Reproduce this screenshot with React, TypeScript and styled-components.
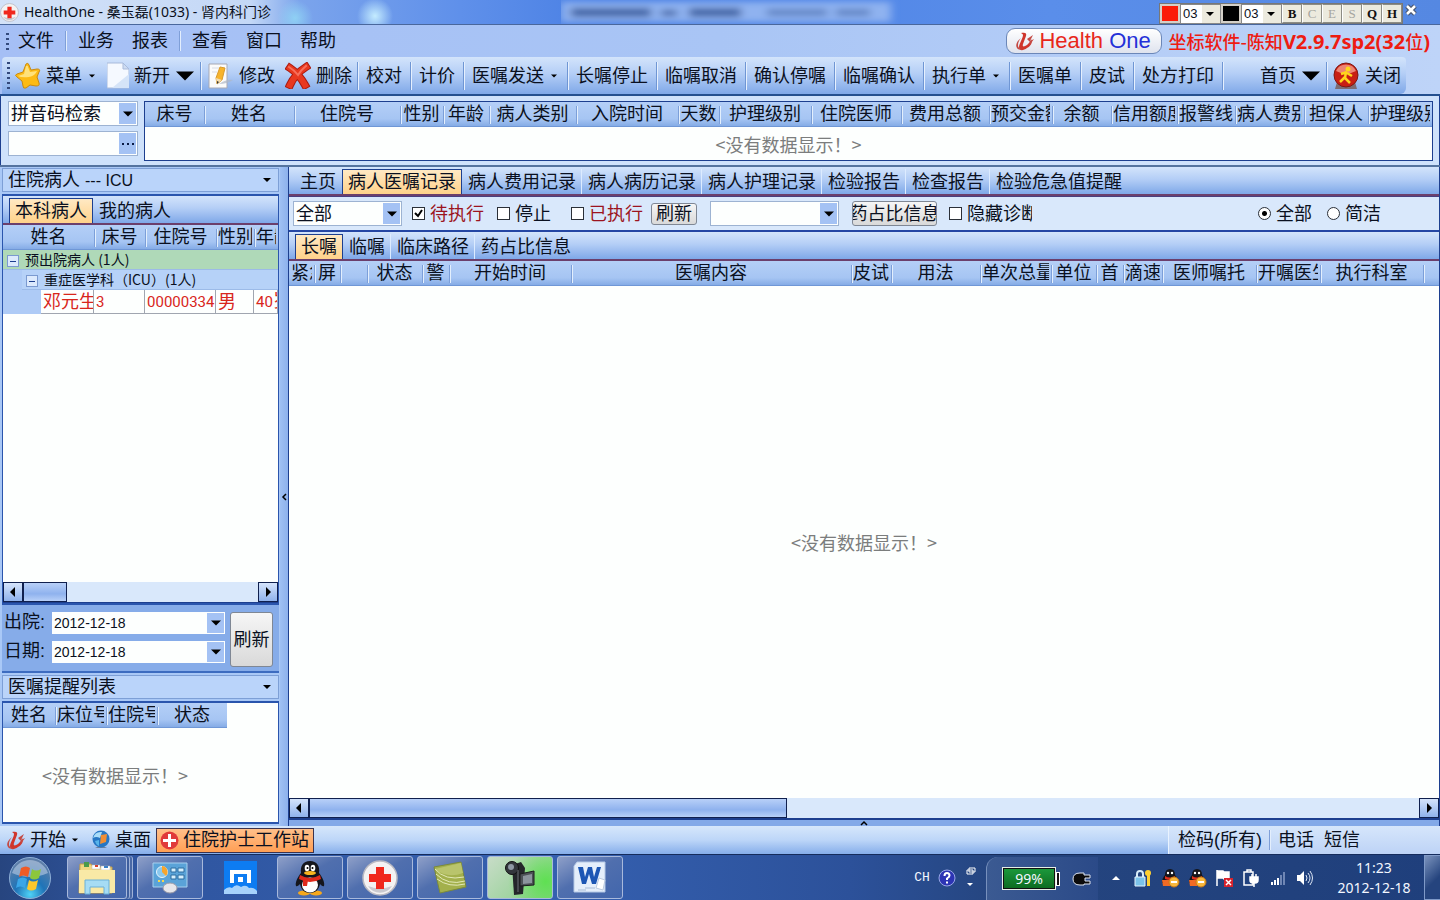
import React from "react";
import styled, { createGlobalStyle, css } from "styled-components";

const Global = createGlobalStyle`
  *, *::before, *::after { box-sizing: border-box; }
  body {
    margin: 0;
    font-family: "Liberation Sans", "Noto Sans CJK SC", sans-serif;
    font-size: 18px;
    line-height: 24px;
    color: #0a1020;
    background: #7ea6e6;
  }
  button, input, select { font: inherit; color: inherit; margin: 0; }
  button { cursor: pointer; }
`;

const navy = "#1d3f8f";
const barGradient = "linear-gradient(#d3e4fb 0%, #b4cef6 45%, #7fa8e8 100%)";
const headGradient = "linear-gradient(#b4cff7 0%, #a6c5f3 70%, #85ace6 100%)";
const orange = "linear-gradient(#ffe9c4, #ffd28a)";

const Page = styled.div`
  display: flex;
  flex-direction: column;
  min-height: 100vh;
  overflow: hidden;
`;

/* Window title */
const TitleBar = styled.header`
  display: flex;
  align-items: center;
  height: 25px;
  padding-right: 21px;
  border-bottom: 1px solid #49679c;
  background:
    radial-gradient(circle at 295px 18px, #8fd0f4 0, transparent 18px),
    radial-gradient(circle at 375px 16px, #c4ecff 0, transparent 18px),
    linear-gradient(90deg, #d3e2f8 0, #c4d8f6 250px, #7ba4ec 300px, #5f90ea 460px, #4a80e4 600px, #5a8eea 1050px, #5588e2 100%);
`;
const TitleText = styled.h1`
  margin: 0 0 0 5px;
  font: 400 14px/22px "Noto Sans", "Noto Sans CJK SC", sans-serif;
  white-space: nowrap;
`;
const Glass = styled.svg`
  flex: 1;
  height: 24px;
  margin-left: 290px;
`;
const PenBar = styled.div`
  display: flex;
  align-items: stretch;
  height: 21px;
  margin-top: 3px;
  background: #ece9d8;
  border: 1px solid #777;
`;
const Swatch = styled.button<{ $c: string }>`
  width: 20px;
  padding: 0;
  border: 2px solid #d4d0c8;
  background: ${(p) => p.$c};
`;
const PenSize = styled.select`
  appearance: none;
  width: 41px;
  padding: 0 0 0 2px;
  border: 1px solid #888;
  border-radius: 0;
  background: #fff;
  font-size: 13px;
  line-height: 18px;
`;
const PenKey = styled.button<{ $off?: boolean }>`
  width: 20px;
  padding: 0;
  border: 1px solid #8c8c84;
  border-left-color: #fff;
  background: #eceade;
  font: 700 13px/17px "Liberation Serif", serif;
  color: ${(p) => (p.$off ? "#a6a6a0" : "#111")};
  font-weight: ${(p) => (p.$off ? 400 : 700)};
`;
const TitleClose = styled.button`
  width: 16px;
  height: 18px;
  margin: 0 0 4px 0;
  padding: 0;
  border: 0;
  background: none;
  line-height: 0;
`;

/* Menu and toolbar */
const MenuBar = styled.nav`
  display: flex;
  align-items: center;
  height: 32px;
  padding: 0 10px 0 6px;
  background: linear-gradient(90deg, #a5bff5, #a9c5f5 50%, #bed4f8);
`;
const Grip = styled.span<{ $h: number }>`
  width: 3px;
  height: ${(p) => p.$h}px;
  background: repeating-linear-gradient(#33497c 0 2px, transparent 2px 5px);
`;
const MenuItem = styled.button`
  padding: 0 9px;
  border: 0;
  background: none;
  white-space: nowrap;
`;
const MenuSep = styled.span`
  width: 2px;
  height: 20px;
  margin: 0 2px;
  border-left: 1px solid #7f9fd8;
  border-right: 1px solid #e3eefd;
`;
const Brand = styled.div`
  display: flex;
  align-items: center;
  gap: 4px;
  width: 156px;
  height: 26px;
  margin-left: auto;
  padding-left: 8px;
  border: 1px solid #6b87b8;
  border-radius: 9px;
  background: linear-gradient(#fff, #dfe3ee);
  font-size: 22px;
  white-space: nowrap;
  color: #e8271a;
  b { font-weight: 400; color: #2430d8; }
`;
const Version = styled.p`
  margin: 0 0 0 6px;
  font-family: "Noto Sans CJK SC", sans-serif;
  font-weight: 500;
  white-space: nowrap;
  color: #ee1c12;
  b { font: 700 20px/24px "Noto Sans", sans-serif; }
`;
const ToolBarRow = styled.div`
  height: 39px;
  padding: 0 34px 0 2px;
  border-bottom: 2px solid #24508f;
  background: linear-gradient(90deg, #a5bff5, #a9c5f5 50%, #bed4f8);
`;
const ToolBar = styled.div`
  display: flex;
  align-items: center;
  height: 37px;
  padding-left: 5px;
  border-radius: 4px 4px 6px 0;
  background: ${barGradient};
`;
const Tool = styled.button<{ $icon?: boolean; $sep?: boolean; $end?: boolean }>`
  display: flex;
  align-items: center;
  gap: 5px;
  height: 28px;
  padding: 0 ${(p) => (p.$icon ? 5 : 8)}px;
  border: 0;
  border-right: ${(p) => (p.$sep ? "1px solid #6f96d4" : "0")};
  box-shadow: ${(p) => (p.$sep ? "1px 0 0 #e6f0fe" : "none")};
  margin-left: ${(p) => (p.$end ? "auto" : "0")};
  background: none;
  white-space: nowrap;
`;

/* Search strip */
const SearchStrip = styled.section`
  display: flex;
  gap: 6px;
  padding: 5px 6px 4px 7px;
  border-left: 1px solid ${navy};
  border-right: 1px solid ${navy};
  background: #cfe2fb;
`;
const SearchFields = styled.div`
  display: flex;
  flex-direction: column;
  gap: 5px;
  width: 130px;
`;
const ComboBox = styled.div<{ $w?: number; $h?: number; $flat?: boolean }>`
  display: grid;
  flex: none;
  width: ${(p) => (p.$w ? p.$w + "px" : "auto")};
  height: ${(p) => p.$h ?? 25}px;
  border: ${(p) => (p.$flat ? "0" : "1px solid #9db3d2")};
  background: #fdfffe;
  > * { grid-area: 1 / 1; }
`;
const comboField = css`
  appearance: none;
  width: 100%;
  min-width: 0;
  height: 100%;
  padding: 0 20px 0 2px;
  border: 0;
  border-radius: 0;
  background: none;
  outline: none;
`;
const SelectField = styled.select`
  ${comboField}
  line-height: 20px;
`;
const InputField = styled.input<{ $small?: boolean }>`
  ${comboField}
  font-size: ${(p) => (p.$small ? 14 : 18)}px;
`;
const ComboKey = styled.span`
  display: flex;
  align-items: center;
  justify-content: center;
  justify-self: end;
  align-self: stretch;
  width: 17px;
  margin: 1px;
  background: #a4c2f4;
  pointer-events: none;
`;

/* Data grids */
const GridFrame = styled.div`
  flex: 1;
  min-width: 0;
  border: 1px solid ${navy};
  background: #fdfffe;
`;
const Grid = styled.table<{ $w?: number }>`
  width: ${(p) => (p.$w ? p.$w + "px" : "100%")};
  table-layout: fixed;
  border-collapse: separate;
  border-spacing: 0;
`;
const HeadCell = styled.th`
  height: 25px;
  padding: 0 2px;
  border-bottom: 1px solid #6f97d6;
  background: ${headGradient};
  font-weight: 400;
`;
const HeadLabel = styled.div`
  height: 24px;
  overflow: hidden;
  white-space: nowrap;
`;
const HeadCells = styled.tr`
  ${HeadCell} + ${HeadCell} {
    background: linear-gradient(#7c9fd9, #7c9fd9) 0 4px / 1px 18px no-repeat,
      linear-gradient(#e3effd, #e3effd) 1px 4px / 1px 18px no-repeat, ${headGradient};
  }
`;
const EmptyRow = styled.tr`
  td { height: 33px; padding: 0; }
`;
const Empty = styled.p`
  margin: 0;
  font-family: "Noto Sans CJK SC", sans-serif;
  text-align: center;
  color: #7b7d7d;
`;
const EmptyTall = styled.div<{ $w?: number }>`
  display: flex;
  flex: 1;
  align-items: center;
  justify-content: center;
  width: ${(p) => (p.$w ? p.$w + "px" : "auto")};
`;

/* Main area */
const Main = styled.main`
  display: flex;
  flex: 1;
  border-top: 2px solid #55749f;
  background: #a9c8f6;
`;
const Side = styled.aside`
  display: flex;
  flex-direction: column;
  flex: none;
  width: 280px;
  padding: 1px 0 2px 2px;
`;
const GroupHead = styled.button`
  display: flex;
  align-items: center;
  justify-content: space-between;
  height: 24px;
  margin-right: 1px;
  padding: 0 6px 0 5px;
  border: 1px solid #7d9fd6;
  background: #bad4fa;
  text-align: left;
  small { font-size: 16px; }
`;
const SidePanel = styled.div<{ $grow?: boolean; $h?: number }>`
  display: flex;
  flex-direction: column;
  flex: ${(p) => (p.$grow ? "1" : "none")};
  height: ${(p) => (p.$h ? p.$h + "px" : "auto")};
  margin-top: 2px;
  margin-right: 1px;
  border: 2px solid #2a55ad;
  border-width: 2px 1px;
  background: #fdfffe;
`;
const Gap = styled.div`
  height: 2px;
`;
const Tabs = styled.div<{ $indent: number }>`
  display: flex;
  align-items: flex-end;
  height: 29px;
  padding-left: ${(p) => p.$indent}px;
  border-bottom: 2px solid #6b3f6c;
  background: ${barGradient};
`;
const Tab = styled.button<{ $on?: boolean; $sep?: boolean }>`
  height: 25px;
  padding: 0 5px 0 6px;
  border: 0;
  border-right: 1px solid ${(p) => (p.$sep ? "#dcebff" : "transparent")};
  background: none;
  white-space: nowrap;
  ${(p) =>
    p.$on &&
    css`
      padding: 0 5px;
      border: 1px solid ${navy};
      border-bottom: 0;
      background: ${orange};
    `}
`;
const Indent = styled.td`
  background: #aecbf6;
`;
const GroupCell = styled.td<{ $green?: boolean }>`
  height: 20px;
  padding: 0 0 0 4px;
  border-bottom: 1px solid #9cbbe8;
  background: ${(p) => (p.$green ? "#afd9b8" : "#b6d2f8")};
  font-family: "Noto Sans CJK SC", sans-serif;
  font-size: 14px;
  line-height: 19px;
  white-space: nowrap;
`;
const Fold = styled.button`
  width: 12px;
  height: 12px;
  margin-right: 6px;
  padding: 0;
  border: 1px solid #7b9ad0;
  background: linear-gradient(#1d3f8f, #1d3f8f) center / 6px 1px no-repeat, #dceafd;
  vertical-align: -1px;
`;
const RedCell = styled.td`
  height: 24px;
  padding: 0 0 0 2px;
  overflow: hidden;
  border-right: 1px solid #a0a6b0;
  border-bottom: 1px solid #a0a6b0;
  font-size: 18px;
  line-height: 22px;
  white-space: nowrap;
  color: #d8261c;
  small { font: 15px/22px Roboto, sans-serif; }
`;
const Scroll = styled.div`
  display: flex;
  height: 21px;
  margin-top: auto;
  border-bottom: 1px solid ${navy};
  background: #d9e8fb;
`;
const ScrollKey = styled.button<{ $end?: boolean }>`
  width: 20px;
  padding: 0;
  border: 1px solid #10204e;
  margin-left: ${(p) => (p.$end ? "auto" : "0")};
  background: linear-gradient(#d5e4fb, #8fb2ec);
  line-height: 0;
`;
const ScrollThumb = styled.div<{ $w: string }>`
  width: ${(p) => p.$w};
  border: 1px solid #10204e;
  background: linear-gradient(#b8d0f8, #8fb2ee 60%, #b8d0f8);
`;
const DateForm = styled.form`
  display: flex;
  gap: 5px;
  height: 68px;
  margin-right: 1px;
  padding: 7px 6px 0 2px;
  border-bottom: 2px solid #3d6cc0;
  background: #86ace9;
`;
const DateRows = styled.div`
  display: flex;
  flex-direction: column;
  gap: 7px;
`;
const DateRow = styled.div`
  display: flex;
  label { width: 48px; line-height: 20px; white-space: nowrap; }
`;
const PushButton = styled.button<{ $w: number; $h: number }>`
  display: flex;
  align-items: center;
  justify-content: center;
  width: ${(p) => p.$w}px;
  height: ${(p) => p.$h}px;
  padding: 0;
  overflow: hidden;
  border: 1px solid #7f8794;
  border-radius: 3px;
  background: linear-gradient(#f6f6f6, #d9d9d9);
  line-height: 18px;
  white-space: nowrap;
`;
const Splitter = styled.div`
  display: flex;
  align-items: center;
  flex: none;
  width: 8px;
  background: linear-gradient(90deg, #9fc0f3, #8db1ec);
`;
const Work = styled.section`
  display: flex;
  flex-direction: column;
  flex: 1;
  min-width: 0;
  border-left: 1px solid ${navy};
  border-right: 1px solid ${navy};
`;
const Filters = styled.div`
  display: flex;
  align-items: center;
  height: 36px;
  padding: 0 58px 0 4px;
  border-top: 1px solid #4a3f80;
  border-bottom: 2px solid #2446a4;
  background: #d9e8fb;
`;
const Check = styled.label<{ $gap: number; $red?: boolean; $w?: number }>`
  display: flex;
  align-items: center;
  gap: 5px;
  flex: none;
  width: ${(p) => (p.$w ? p.$w + "px" : "auto")};
  margin-left: ${(p) => p.$gap}px;
  overflow: hidden;
  white-space: nowrap;
  color: ${(p) => (p.$red ? "#9c1420" : "inherit")};
  input {
    appearance: none;
    flex: none;
    width: 13px;
    height: 13px;
    margin: 0;
    border: 1px solid #2b3038;
    background: #fff;
  }
  input[type="radio"] { border-radius: 50%; }
  input[type="radio"]:checked { background: radial-gradient(circle, #000 0 2px, #fff 3px); }
`;
const CheckMark = styled.span`
  display: grid;
  flex: none;
  > * { grid-area: 1 / 1; }
  svg { pointer-events: none; }
`;
const Spacer = styled.span<{ $w: number }>`
  flex: none;
  width: ${(p) => p.$w}px;
`;
const Right = styled.div`
  display: flex;
  margin-left: auto;
`;
const Orders = styled.div`
  display: flex;
  flex-direction: column;
  flex: 1;
  background: #fdfffe;
`;
const WorkFoot = styled.div`
  display: flex;
  justify-content: center;
  height: 7px;
  border-top: 1px solid ${navy};
  background: #83a9e8;
`;

/* Application status row */
const StatusBar = styled.footer`
  display: flex;
  align-items: center;
  height: 29px;
  border-bottom: 1px solid #152c5c;
  background: linear-gradient(#d6e7fb 0%, #bdd6f8 50%, #86aeea 100%);
`;
const StatusItem = styled.button<{ $on?: boolean }>`
  display: flex;
  align-items: center;
  gap: 4px;
  height: 25px;
  padding: 0 5px 0 6px;
  border: 0;
  background: none;
  white-space: nowrap;
  ${(p) =>
    p.$on &&
    css`
      padding: 0 4px 0 3px;
      border: 1px solid #3a3350;
      background: linear-gradient(#ffc08a, #ff9f55);
    `}
`;
const StatusRight = styled.div`
  display: flex;
  align-items: center;
  align-self: stretch;
  width: 272px;
  margin-left: auto;
  padding-left: 4px;
  border-left: 1px solid #e9f3ff;
  background: linear-gradient(#d6e6fb, #bdd3f6);
  button { padding: 0 5px; border: 0; background: none; white-space: nowrap; }
`;

/* Desktop taskbar */
const TaskBar = styled.nav`
  display: flex;
  align-items: center;
  height: 45px;
  background: linear-gradient(90deg, #27457f 0, #2f559f 130px, #3560b0 560px, #2c519a 850px, #25457f 1000px, #1f3f7c 100%);
`;
const StartKey = styled.button`
  width: 60px;
  height: 45px;
  padding: 0;
  border: 0;
  background: none;
  line-height: 0;
`;
const TaskApp = styled.button<{ $on?: boolean; $bare?: boolean; $stack?: boolean }>`
  display: flex;
  align-items: center;
  justify-content: center;
  flex: none;
  width: ${(p) => (p.$stack ? 60 : 66)}px;
  height: 43px;
  margin-right: ${(p) => (p.$stack ? 10 : 4)}px;
  padding: 0;
  border: 1px solid ${(p) => (p.$bare ? "transparent" : "#a8b9dc")};
  border-radius: 3px;
  box-shadow: ${(p) => (p.$stack ? "2px 0 0 #3f5f9e, 3px 0 0 #9fb2d8, 5px 0 0 #4a69a6, 6px 0 0 #9fb2d8" : "none")};
  background: ${(p) =>
    p.$bare
      ? "none"
      : p.$on
        ? "radial-gradient(circle at 90% 60%, #5fe052, transparent 60%), linear-gradient(135deg, #c8dcc8, #86cf86)"
        : "linear-gradient(150deg, #8e9fc8 0, #506fae 45%, #4266ac 100%)"};
`;
const Tray = styled.div`
  display: flex;
  align-items: center;
  align-self: stretch;
  margin-left: auto;
  color: #f3f7ff;
`;
const TrayLang = styled.button`
  width: 32px;
  padding: 0;
  border: 0;
  background: none;
  font: 13px/20px "Liberation Mono", monospace;
  text-align: center;
`;
const TrayPower = styled.div`
  display: flex;
  align-items: center;
  gap: 12px;
  align-self: stretch;
  width: 112px;
  margin: 2px 0 0 10px;
  padding-left: 15px;
  border-left: 1px solid #7790bd;
  border-top-left-radius: 12px;
  background: linear-gradient(90deg, #3b5a92, #2b4a88);
`;
const Battery = styled.div`
  display: flex;
  align-items: center;
  &::after { content: ""; width: 4px; height: 14px; border: 1px solid #fff; background: #111; }
  span {
    width: 54px;
    height: 23px;
    border: 1px solid #e6efe6;
    outline: 1px solid #111;
    outline-offset: -2px;
    background: linear-gradient(#1c9a3c, #0c6a20);
    font: 14px/21px "Noto Sans", sans-serif;
    text-align: center;
  }
`;
const TrayIcons = styled.div`
  display: flex;
  align-items: center;
  gap: 7px;
  margin-left: 8px;
`;
const Clock = styled.time`
  width: 100px;
  margin-left: 9px;
  font: 14px/20px "Noto Sans", sans-serif;
  text-align: center;
  white-space: nowrap;
`;
const ShowDesktop = styled.button`
  align-self: stretch;
  width: 16px;
  padding: 0;
  border: 1px solid #7f9ac8;
  border-right: 0;
  background: linear-gradient(135deg, #7b93bd, #25447e 60%);
`;

const Caret = ({ w = 10, t = 6, c = "#000" }: { w?: number; t?: number; c?: string }) => (
  <svg width={w} height={10} viewBox={`0 0 ${w} 10`} aria-hidden="true">
    <path d={`M${(w - t) / 2} ${5 - t / 4}h${t}l${-t / 2} ${t / 2}z`} fill={c} />
  </svg>
);
const Arrow = ({ d }: { d: "l" | "r" }) => (
  <svg width="14" height="14" viewBox="0 0 14 14" aria-hidden="true">
    <path d={d === "l" ? "M9 2v10L4 7z" : "M5 2v10l5-5z"} fill="#000" />
  </svg>
);
const Cross = ({ s }: { s: number }) => (
  <svg width={s} height={s} viewBox="0 0 36 36" aria-hidden="true">
    <circle cx="18" cy="18" r="17" fill="#f4f2f2" stroke="#b9b9c2" strokeWidth="1.5" />
    <path d="M6 26a14 14 0 0 0 24 0 20 12 0 0 1-24 0z" fill="#c9c9cf" />
    <path d="M14 7h8v7h7v8h-7v7h-8v-7H7v-8h7z" fill="#f0281c" />
  </svg>
);
const RedCross = () => (
  <svg width="19" height="19" viewBox="0 0 19 19" aria-hidden="true">
    <circle cx="9.500" cy="9.500" r="9" fill="#e03a3a" />
    <path d="M8 3h3v5h5v3h-5v5H8v-5H3V8h5z" fill="#fff" />
  </svg>
);
const Swirl = ({ s = 20 }: { s?: number }) => (
  <svg width={s} height={s} viewBox="0 0 20 20" aria-hidden="true">
    <path d="M6 2c4-1 6 0 5 3L8 13c-1 3 1 3 4 1 2-2 4-4 4-6 2 3 0 7-4 9-4 3-8 3-8-1 0-3 4-9 4-12 0-1-1-1-2-2z" fill="#d0362c" />
    <path d="M6 7C2 10 0 14 2 17c1 2 4 2 6 1-3 0-5-1-5-4 0-2 1-5 3-7zM12 8l6-4-3 6 4-2-5 7 1-4z" fill="#c44a44" />
  </svg>
);
const Star = () => (
  <svg width="26" height="27" viewBox="0 0 26 27" aria-hidden="true">
    <path d="M11 2q2-2 3 1l2 5 6-1q4 0 2 3l-2 5 2 6q1 3-3 3l-6-1-4 3q-3 1-3-2l-1-5-5-4q-3-2 0-3l6-2z" fill="#fdbb14" stroke="#c98a12" />
    <path d="M11 4q2-1 2 1l2 5 7-1q-2 5-8 6-7 1-11-1l6-2z" fill="#ffe27a" />
  </svg>
);
const PageIcon = () => (
  <svg width="22" height="27" viewBox="0 0 22 27" aria-hidden="true">
    <path d="M0 1h16l6 6v19H0z" fill="#f5f9ff" stroke="#a9bbdb" />
    <path d="M5 26L22 12v14z" fill="#d5e4f8" />
    <path d="M16 1v6h6z" fill="#cddcf2" stroke="#a9bbdb" />
  </svg>
);
const EditIcon = () => (
  <svg width="28" height="26" viewBox="0 0 28 26" aria-hidden="true">
    <path d="M3 1h18v24H3z" fill="#fbfbfb" stroke="#a7a9b5" />
    <path d="M6 5h7M6 9h5" stroke="#d9dce4" />
    <path d="M14 4l5 1-3 12-5 4-1-6z" fill="#f7b42c" stroke="#d99a2c" />
    <path d="M10 15l1 6 5-4z" fill="#f3dcb0" />
    <path d="M11 21l0-3 2 1z" fill="#333" />
    <path d="M13 21q8-5 14-4-6 4-14 4z" fill="#aeb6c6" opacity=".7" />
  </svg>
);
const DeleteIcon = () => (
  <svg width="26" height="27" viewBox="0 0 26 27" aria-hidden="true" strokeLinecap="square" fill="none">
    <path d="M5 6q9 6 15 17M21 5Q10 12 5 23" stroke="#a81a10" strokeWidth="8" />
    <path d="M5 6q9 6 15 17M21 5Q10 12 5 23" stroke="#e8381f" strokeWidth="6" />
    <path d="M4 5q5 3 9 8 3-5 8-9" stroke="#f7705c" strokeWidth="2" />
  </svg>
);
const ExitIcon = () => (
  <svg width="28" height="28" viewBox="0 0 28 28" aria-hidden="true">
    <path d="M5 20h18l2 7H3z" fill="#7d6c73" />
    <circle cx="14" cy="13" r="12" fill="#c81f14" stroke="#7c1a16" />
    <path d="M4 9a11 11 0 0 1 20 0q-10 5-20 0z" fill="#ee8573" />
    <circle cx="16" cy="7" r="2.500" fill="#ffd61c" />
    <path d="M15 10l-6 2M14 10l-1 6 5 5M13 15l-5 5M15 11l5 3" stroke="#ffd61c" strokeWidth="2.500" fill="none" />
  </svg>
);
const Globe = () => (
  <svg width="20" height="20" viewBox="0 0 20 20" aria-hidden="true">
    <path d="M4 18q6-4 12 0z" fill="#6d7f9c" />
    <circle cx="10" cy="9" r="8.500" fill="#2676c4" />
    <path d="M2 8q2-7 9-6l-2 6q-4-2-7 0z" fill="#a9dcf8" />
    <path d="M10 5l6-1-1 8-6 2z" fill="#f08e34" />
    <path d="M4 11l4-1v6q-3-1-4-5z" fill="#57b4ea" />
  </svg>
);
const WinOrb = () => (
  <svg width="44" height="44" viewBox="0 0 44 44" aria-hidden="true">
    <defs>
      <radialGradient id="orb" cx=".5" cy=".9" r=".8">
        <stop offset="0" stopColor="#4fd3f6" />
        <stop offset=".45" stopColor="#1f74b8" />
        <stop offset="1" stopColor="#5d7ea8" />
      </radialGradient>
    </defs>
    <circle cx="22" cy="22" r="20.500" fill="url(#orb)" stroke="#8fb0d8" />
    <path d="M4 17a19 19 0 0 1 36 0q-18 8-36 0z" fill="#c3d3ea" opacity=".55" />
    <path d="M13 12q5-3 9 0l-2 9q-5-3-9 0z" fill="#ee5b27" />
    <path d="M24 13q4 3 9 0l-2 9q-5 3-9 0z" fill="#8cc63c" />
    <path d="M10 23q5-3 9 0l-2 9q-5-3-9 0z" fill="#3aa6e8" />
    <path d="M21 24q4 3 9 0l-2 9q-5 3-9 0z" fill="#fdc82c" />
  </svg>
);
const Explorer = () => (
  <svg width="38" height="34" viewBox="0 0 38 34" aria-hidden="true">
    <path d="M2 3h11l2 3h19v26H1z" fill="#f0d782" stroke="#c09c48" />
    <path d="M6 1h5v5H6z" fill="#4a9a4a" />
    <path d="M14 4h8v4h-8zM23 5h9v4h-9z" fill="#fff" stroke="#bbb" strokeWidth=".5" />
    <path d="M17 4h3v2h-3z" fill="#d8432c" />
    <path d="M26 5h4v2h-4z" fill="#3a80c8" />
    <path d="M1 9h36v23H1z" fill="#f9e9a6" />
    <path d="M7 19h24v14h-5v-7H12v7H7z" fill="#a6dcf4" stroke="#6bb0d8" />
  </svg>
);
const ControlPanel = () => (
  <svg width="38" height="32" viewBox="0 0 38 32" aria-hidden="true">
    <path d="M2 1h34v24H2z" fill="#5aa3d8" stroke="#a8d0ee" />
    <circle cx="11" cy="10" r="5.500" fill="#8ac8ee" stroke="#e6f5ff" />
    <path d="M11 10V4a6 6 0 0 1 4 10z" fill="#f6a52e" />
    <path d="M20 6h5v4h-5zM27 6h6v4h-6zM20 13h5v4h-5zM27 13h6v4h-6z" fill="#d5eefc" stroke="#2d6ca0" />
    <path d="M7 19h2M11 19h2" stroke="#f6d84e" strokeWidth="2" />
    <ellipse cx="19" cy="26" rx="7" ry="5" fill="#e6e6ea" stroke="#9a9aa6" />
  </svg>
);
const Maxthon = () => (
  <svg width="33" height="33" viewBox="0 0 33 33" aria-hidden="true">
    <path d="M0 0h33v33H0z" fill="#0d7cf2" />
    <path d="M8 22V11h17v11" fill="none" stroke="#fff" strokeWidth="4" />
    <path d="M14 16h5v5h-5z" fill="#fff" />
    <path d="M0 33v-4q4-4 8-2 4-5 9-1 5-3 8 1 5-1 8 3v3z" fill="#a6d2fb" />
  </svg>
);
const Penguin = ({ s = 36 }: { s?: number }) => (
  <svg width={s} height={s} viewBox="0 0 36 36" aria-hidden="true">
    <ellipse cx="12" cy="33" rx="6" ry="2.500" fill="#f6a81c" />
    <ellipse cx="24" cy="33" rx="6" ry="2.500" fill="#f6a81c" />
    <path d="M18 1c-7 0-10 5-9 12-4 5-6 10-5 13 1 1 3-1 4-2 1 5 4 9 10 9s9-4 10-9c1 1 3 3 4 2 1-3-1-8-5-13C28 6 25 1 18 1z" fill="#15161c" />
    <ellipse cx="18" cy="25" rx="8" ry="7.500" fill="#fff" />
    <ellipse cx="15" cy="8" rx="2.300" ry="3.200" fill="#fff" />
    <ellipse cx="21" cy="8" rx="2.300" ry="3.200" fill="#fff" />
    <circle cx="15.500" cy="8" r="1" />
    <circle cx="20.500" cy="8" r="1" />
    <ellipse cx="18" cy="13" rx="6" ry="2" fill="#f8b41e" />
    <path d="M8 15q10 6 20 0l1 4q-11 6-22 0z" fill="#e02a1c" />
    <path d="M11 19l5 1-1 6h-4z" fill="#e02a1c" />
  </svg>
);
const NoteIcon = () => (
  <svg width="34" height="34" viewBox="0 0 34 34" aria-hidden="true">
    <path d="M1 6l27-5 5 25-26 6z" fill="#a3b04c" stroke="#7b8a3c" />
    <path d="M2 8l26-6 2 10q-16 6-28-4z" fill="#b9c46c" />
    <path d="M2 8q10 12 29 8M3 13q12 12 29 7M4 18q12 9 28 5" fill="none" stroke="#e3e9b8" />
  </svg>
);
const Camcorder = () => (
  <svg width="34" height="36" viewBox="0 0 34 36" aria-hidden="true">
    <path d="M9 5l9-3 4 6-2 26-9 1z" fill="#24262a" />
    <circle cx="9" cy="8" r="6.500" fill="#33363c" stroke="#111" />
    <circle cx="8" cy="7" r="3" fill="#8f98a4" />
    <path d="M17 14l14-3v14l-14 1z" fill="#4d5157" stroke="#1b1b1d" />
    <path d="M20 16l9-2v9l-9 1z" fill="#8c949d" />
    <path d="M15 10v22" stroke="#6a6e75" />
  </svg>
);
const WordIcon = () => (
  <svg width="34" height="33" viewBox="0 0 34 33" aria-hidden="true">
    <path d="M4 1h28v30H1V5z" fill="#e4eefb" stroke="#b5c9e6" />
    <path d="M5 6h5l2 10 3-10h4l2 10 3-10h4l-5 17h-4l-3-10-3 10H9z" fill="#1c56b4" />
    <path d="M26 17l6 2-2 10-7-2z" fill="#fff" stroke="#bccbe0" />
    <path d="M12 27h10M5 29h8" stroke="#a8bcd8" />
  </svg>
);
const TrayPenguin = () => (
  <svg width="20" height="20" viewBox="0 0 20 20" aria-hidden="true">
    <path d="M10 1q-5 0-5 6-3 3-3 8h16q0-5-3-8 0-6-5-6z" fill="#14151a" />
    <path d="M5 8q5 3 10 0v3q-5 2-10 0z" fill="#e0301e" />
    <path d="M2 12h8v6H3z" fill="#f06a24" />
    <circle cx="8" cy="5" r="1.200" fill="#fff" />
    <circle cx="12" cy="5" r="1.200" fill="#fff" />
    <circle cx="14" cy="14" r="5" fill="#f7b83c" stroke="#c87a18" />
    <path d="M11 14h6" stroke="#fff" strokeWidth="2" />
  </svg>
);

type Col = [string, number?];

function GridHead({ cols }: { cols: Col[] }) {
  return (
    <>
      <colgroup>
        {cols.map(([, w], i) => (
          <col key={i} width={w} />
        ))}
      </colgroup>
      <thead>
        <HeadCells>
          {cols.map(([t], i) => (
            <HeadCell key={i} scope="col">
              <HeadLabel>{t}</HeadLabel>
            </HeadCell>
          ))}
        </HeadCells>
      </thead>
    </>
  );
}

const patientCols: Col[] = [
  ["床号", 59], ["姓名", 90], ["住院号", 106], ["性别", 43], ["年龄", 46], ["病人类别", 87],
  ["入院时间"], ["天数", 41], ["护理级别", 92], ["住院医师", 90], ["费用总额", 88], ["预交金额", 63],
  ["余额", 59], ["信用额度", 66], ["报警线", 58], ["病人费别", 69], ["担保人", 64], ["护理级别", 64],
];
const orderCols: Col[] = [
  ["紧急", 25], ["屏", 26], ["", 27], ["状态", 55], ["警", 27], ["开始时间", 122], ["医嘱内容"],
  ["皮试", 40], ["用法", 89], ["单次总量", 71], ["单位", 45], ["首", 27], ["滴速", 39],
  ["医师嘱托", 94], ["开嘱医生", 64], ["执行科室", 103], ["", 16],
];
const remindCols: Col[] = [["姓名", 52], ["床位号", 51], ["住院号", 51], ["状态", 70]];

const emptyText = "<没有数据显示！>";

function Combo({ label, w, options }: { label: string; w?: number; options: string[] }) {
  return (
    <ComboBox $w={w}>
      <SelectField aria-label={label}>
        {options.map((o) => (
          <option key={o}>{o}</option>
        ))}
      </SelectField>
      <ComboKey>
        <Caret w={14} t={10} />
      </ComboKey>
    </ComboBox>
  );
}

function DateField({ id, label }: { id: string; label: string }) {
  return (
    <DateRow>
      <label htmlFor={id}>{label}:</label>
      <ComboBox $w={173} $h={22} $flat>
        <InputField id={id} $small defaultValue="2012-12-18" />
        <ComboKey>
          <Caret w={14} t={10} />
        </ComboKey>
      </ComboBox>
    </DateRow>
  );
}

function CheckBox({ label, gap, red, on, w }: { label: string; gap: number; red?: boolean; on?: boolean; w?: number }) {
  const [checked, setChecked] = React.useState(!!on);
  return (
    <Check $gap={gap} $red={red} $w={w}>
      <CheckMark>
        <input type="checkbox" checked={checked} onChange={() => setChecked(!checked)} />
        {checked && (
          <svg width="13" height="13" viewBox="0 0 13 13" aria-hidden="true">
            <path d="M3 6l3 3 4-6" fill="none" stroke="#000" strokeWidth="2" />
          </svg>
        )}
      </CheckMark>
      {label}
    </Check>
  );
}

const PenCombo = styled.div`
  display: grid;
  > * { grid-area: 1 / 1; }
`;
const PenArrow = styled.span`
  display: flex;
  align-items: center;
  justify-self: end;
  width: 18px;
  margin: 1px;
  padding-left: 3px;
  background: #eceade;
  pointer-events: none;
`;
function PenWidth({ label }: { label: string }) {
  return (
    <PenCombo>
      <PenSize aria-label={label}>
        <option>03</option>
      </PenSize>
      <PenArrow>
        <Caret w={10} t={8} />
      </PenArrow>
    </PenCombo>
  );
}

function Window() {
  return (
    <>
      <TitleBar>
        <Cross s={19} />
        <TitleText>HealthOne - 桑玉磊(1033) - 肾内科门诊</TitleText>
        <Glass aria-hidden="true">
          <defs>
            <filter id="soft">
              <feGaussianBlur stdDeviation="4 3" />
            </filter>
          </defs>
          <g filter="url(#soft)">
            <rect x="0" y="2" width="330" height="20" fill="#8fb2f0" />
            <g fill="#4265a6">
              <rect x="10" y="8" width="80" height="9" />
              <rect x="100" y="10" width="16" height="6" />
              <rect x="128" y="8" width="52" height="9" />
              <rect x="206" y="9" width="60" height="7" opacity=".6" />
              <rect x="275" y="9" width="34" height="7" opacity=".6" />
            </g>
          </g>
        </Glass>
        <PenBar>
          <Swatch $c="#fb1c08" aria-label="画笔颜色" />
          <PenWidth label="画笔粗细" />
          <Swatch $c="#000" aria-label="文字颜色" />
          <PenWidth label="文字粗细" />
          <PenKey>B</PenKey>
          <PenKey $off>C</PenKey>
          <PenKey $off>E</PenKey>
          <PenKey $off>S</PenKey>
          <PenKey>Q</PenKey>
          <PenKey>H</PenKey>
        </PenBar>
        <TitleClose aria-label="关闭窗口">
          <svg width="14" height="14" viewBox="0 0 14 14" aria-hidden="true">
            <path d="M3 3l8 8M11 3l-8 8" stroke="#4a5670" strokeWidth="5" />
            <path d="M3 3l8 8M11 3l-8 8" stroke="#fff" strokeWidth="2.500" />
          </svg>
        </TitleClose>
      </TitleBar>

      <MenuBar>
        <Grip $h={17} />
        <MenuItem>文件</MenuItem>
        <MenuSep />
        <MenuItem>业务</MenuItem>
        <MenuItem>报表</MenuItem>
        <MenuSep />
        <MenuItem>查看</MenuItem>
        <MenuItem>窗口</MenuItem>
        <MenuItem>帮助</MenuItem>
        <Brand>
          <Swirl />
          <span>
            Health <b>One</b>
          </span>
        </Brand>
        <Version>
          坐标软件-陈知<b>V2.9.7sp2(32</b>位<b>)</b>
        </Version>
      </MenuBar>

      <ToolBarRow>
        <ToolBar>
          <Grip $h={27} />
          <Tool $icon><Star />菜单<Caret /></Tool>
          <Tool $icon $sep><PageIcon />新开<Caret w={20} t={18} /></Tool>
          <Tool $icon><EditIcon />修改</Tool>
          <Tool $icon $sep><DeleteIcon />删除</Tool>
          <Tool $sep>校对</Tool>
          <Tool $sep>计价</Tool>
          <Tool $sep>医嘱发送<Caret /></Tool>
          <Tool $sep>长嘱停止</Tool>
          <Tool $sep>临嘱取消</Tool>
          <Tool $sep>确认停嘱</Tool>
          <Tool $sep>临嘱确认</Tool>
          <Tool $sep>执行单<Caret /></Tool>
          <Tool $sep>医嘱单</Tool>
          <Tool $sep>皮试</Tool>
          <Tool $sep>处方打印</Tool>
          <Tool $icon $sep $end>首页<Caret w={20} t={18} /></Tool>
          <Tool $icon><ExitIcon />关闭</Tool>
        </ToolBar>
      </ToolBarRow>
    </>
  );
}

function SidePane() {
  return (
    <Side>
      <GroupHead>
        <span>住院病人 <small>--- ICU</small></span>
        <Caret t={8} />
      </GroupHead>
      <SidePanel $grow>
        <Tabs $indent={6}>
          <Tab $on>本科病人</Tab>
          <Tab>我的病人</Tab>
        </Tabs>
        <Grid>
          <colgroup>
            <col width={19} />
            <col width={19} />
            <col width={53} />
            <col width={51} />
            <col width={71} />
            <col width={38} />
            <col />
          </colgroup>
          <thead>
            <HeadCells>
              <HeadCell scope="col" colSpan={3}><HeadLabel>姓名</HeadLabel></HeadCell>
              <HeadCell scope="col"><HeadLabel>床号</HeadLabel></HeadCell>
              <HeadCell scope="col"><HeadLabel>住院号</HeadLabel></HeadCell>
              <HeadCell scope="col"><HeadLabel>性别</HeadLabel></HeadCell>
              <HeadCell scope="col"><HeadLabel>年龄</HeadLabel></HeadCell>
            </HeadCells>
          </thead>
          <tbody>
            <tr>
              <GroupCell $green colSpan={7}><Fold aria-label="折叠" />预出院病人 (1人)</GroupCell>
            </tr>
            <tr>
              <Indent />
              <GroupCell colSpan={6}><Fold aria-label="折叠" />重症医学科（ICU）(1人)</GroupCell>
            </tr>
            <tr>
              <Indent />
              <Indent />
              <RedCell>邓元生</RedCell>
              <RedCell><small>3</small></RedCell>
              <RedCell><small>00000334</small></RedCell>
              <RedCell>男</RedCell>
              <RedCell><small>40</small>岁</RedCell>
            </tr>
          </tbody>
        </Grid>
        <Scroll>
          <ScrollKey aria-label="向左"><Arrow d="l" /></ScrollKey>
          <ScrollThumb $w="44px" />
          <ScrollKey $end aria-label="向右"><Arrow d="r" /></ScrollKey>
        </Scroll>
      </SidePanel>
      <DateForm onSubmit={(e) => e.preventDefault()}>
        <DateRows>
          <DateField id="out-from" label="出院" />
          <DateField id="out-to" label="日期" />
        </DateRows>
        <PushButton $w={44} $h={55}>刷新</PushButton>
      </DateForm>
      <Gap />
      <GroupHead>
        <span>医嘱提醒列表</span>
        <Caret t={8} />
      </GroupHead>
      <SidePanel $h={123}>
        <Grid $w={224}>
          <GridHead cols={remindCols} />
        </Grid>
        <EmptyTall $w={224}>
          <Empty>{emptyText}</Empty>
        </EmptyTall>
      </SidePanel>
    </Side>
  );
}

function WorkPane() {
  const [mode, setMode] = React.useState("全部");
  return (
    <Work>
      <Tabs $indent={5}>
        <Tab>主页</Tab>
        <Tab $on>病人医嘱记录</Tab>
        <Tab $sep>病人费用记录</Tab>
        <Tab $sep>病人病历记录</Tab>
        <Tab $sep>病人护理记录</Tab>
        <Tab $sep>检验报告</Tab>
        <Tab $sep>检查报告</Tab>
        <Tab>检验危急值提醒</Tab>
      </Tabs>
      <Filters>
        <Combo label="医嘱范围" w={109} options={["全部"]} />
        <CheckBox label="待执行" gap={10} red on />
        <CheckBox label="停止" gap={13} />
        <CheckBox label="已执行" gap={20} red />
        <Spacer $w={8} />
        <PushButton $w={46} $h={22}>刷新</PushButton>
        <Spacer $w={13} />
        <Combo label="诊断" w={129} options={[""]} />
        <Spacer $w={13} />
        <PushButton $w={85} $h={25}>药占比信息</PushButton>
        <CheckBox label="隐藏诊断" gap={12} w={83} />
        <Right>
          {["全部", "简洁"].map((m) => (
            <Check key={m} $gap={15}>
              <input type="radio" name="mode" checked={mode === m} onChange={() => setMode(m)} />
              {m}
            </Check>
          ))}
        </Right>
      </Filters>
      <Tabs $indent={6}>
        <Tab $on>长嘱</Tab>
        <Tab $sep>临嘱</Tab>
        <Tab $sep>临床路径</Tab>
        <Tab>药占比信息</Tab>
      </Tabs>
      <Orders>
        <Grid>
          <GridHead cols={orderCols} />
        </Grid>
        <EmptyTall>
          <Empty>{emptyText}</Empty>
        </EmptyTall>
        <Scroll>
          <ScrollKey aria-label="向左"><Arrow d="l" /></ScrollKey>
          <ScrollThumb $w="calc(43% - 17px)" />
          <ScrollKey $end aria-label="向右"><Arrow d="r" /></ScrollKey>
        </Scroll>
      </Orders>
      <WorkFoot>
        <svg width="8" height="6" viewBox="0 0 8 6" aria-hidden="true">
          <path d="M1 5l3-3 3 3" fill="none" stroke="#000" strokeWidth="1.500" />
        </svg>
      </WorkFoot>
    </Work>
  );
}

function Desktop() {
  return (
    <TaskBar>
      <StartKey aria-label="开始菜单"><WinOrb /></StartKey>
      <Spacer $w={7} />
      <TaskApp $stack aria-label="资源管理器"><Explorer /></TaskApp>
      <TaskApp aria-label="控制面板"><ControlPanel /></TaskApp>
      <TaskApp $bare aria-label="浏览器"><Maxthon /></TaskApp>
      <TaskApp aria-label="聊天"><Penguin /></TaskApp>
      <TaskApp aria-label="HealthOne"><Cross s={36} /></TaskApp>
      <TaskApp aria-label="便笺"><NoteIcon /></TaskApp>
      <TaskApp $on aria-label="录像机"><Camcorder /></TaskApp>
      <TaskApp aria-label="文档"><WordIcon /></TaskApp>
      <Tray>
        <TrayLang>CH</TrayLang>
        <svg width="38" height="24" viewBox="0 0 38 24" aria-hidden="true">
          <circle cx="9" cy="12" r="8" fill="#2c34b4" stroke="#98a6e6" />
          <path d="M6.500 10q0-3 2.500-3t2.500 2.500q0 1.500-2.500 3V14M9 15.500v2" fill="none" stroke="#fff" strokeWidth="2" />
          <path d="M31 2h6v4h-6zM29 4h6v4h-6z" fill="#25457f" stroke="#fff" />
          <path d="M29 17h6l-3 3z" fill="#fff" />
        </svg>
        <TrayPower>
          <Battery><span>99%</span></Battery>
          <svg width="20" height="14" viewBox="0 0 20 14" aria-hidden="true">
            <path d="M1 7q0-6 7-6h4v2h6v3h-5v3h5v3h-6v1H8q-7 0-7-6z" fill="#0c0c0c" stroke="#dfe6f2" />
          </svg>
        </TrayPower>
        <TrayIcons>
          <svg width="20" height="20" viewBox="0 0 20 20" aria-hidden="true">
            <path d="M6 12h8l-4-4z" fill="#fff" />
          </svg>
          <svg width="20" height="20" viewBox="0 0 20 20" aria-hidden="true">
            <path d="M4 9V6q0-3 3-3t3 3v3" fill="none" stroke="#d7ecf8" strokeWidth="2" />
            <path d="M2 9h10v9H2z" fill="#7cc3ea" stroke="#e5f4fc" />
            <circle cx="15" cy="5" r="3" fill="#ffd032" />
            <path d="M14 7h3v11h-3z" fill="#ffd032" />
          </svg>
          <TrayPenguin />
          <TrayPenguin />
          <svg width="20" height="20" viewBox="0 0 20 20" aria-hidden="true">
            <path d="M3 2v16M4 3h5l1 1h5v7h-5L9 10H4z" fill="#fff" stroke="#fff" strokeWidth="1.500" />
            <path d="M10 10h9v9h-9z" fill="#d8222c" />
            <path d="M12 12l5 5M17 12l-5 5" stroke="#fff" strokeWidth="1.500" />
          </svg>
          <svg width="20" height="20" viewBox="0 0 20 20" aria-hidden="true">
            <path d="M3 4h9v13H3zM6 2h4v2H6z" fill="none" stroke="#fff" strokeWidth="1.500" />
            <path d="M11 6v3M15 6v3M9 9h8v3q0 3-3 3h-2q-3 0-3-3zM13 15v4" fill="#fff" stroke="#fff" strokeWidth="1.500" />
          </svg>
          <svg width="20" height="20" viewBox="0 0 20 20" aria-hidden="true">
            <path d="M3 14h2v3H3zM6 12h2v5H6zM9 10h2v7H9z" fill="#fff" />
            <path d="M12 7h2v10h-2zM15 4h2v13h-2z" fill="#6f86b4" />
          </svg>
          <svg width="20" height="20" viewBox="0 0 20 20" aria-hidden="true">
            <path d="M2 7h3l4-4v14l-4-4H2z" fill="#fff" />
            <path d="M11 7q2 3 0 6M13 5q4 5 0 10M15 3q5 7 0 14" fill="none" stroke="#dfe8f6" />
          </svg>
        </TrayIcons>
        <Clock>
          11:23
          <br />
          2012-12-18
        </Clock>
        <ShowDesktop aria-label="显示桌面" />
      </Tray>
    </TaskBar>
  );
}

export default function App() {
  return (
    <Page lang="zh-CN">
      <Global />
      <Window />
      <SearchStrip>
        <SearchFields>
          <Combo label="检索方式" options={["拼音码检索"]} />
          <ComboBox>
            <InputField aria-label="检索内容" />
            <ComboKey>
              <svg width="14" height="4" viewBox="0 0 14 4" aria-hidden="true">
                <path d="M1 1h2v2H1zM6 1h2v2H6zM11 1h2v2h-2z" fill="#0a1a44" />
              </svg>
            </ComboKey>
          </ComboBox>
        </SearchFields>
        <GridFrame>
          <Grid>
            <GridHead cols={patientCols} />
            <tbody>
              <EmptyRow>
                <td colSpan={patientCols.length}>
                  <Empty>{emptyText}</Empty>
                </td>
              </EmptyRow>
            </tbody>
          </Grid>
        </GridFrame>
      </SearchStrip>
      <Main>
        <SidePane />
        <Splitter>
          <svg width="8" height="10" viewBox="0 0 8 10" aria-hidden="true">
            <path d="M6 2L3 5l3 3" fill="none" stroke="#000" strokeWidth="1.500" />
          </svg>
        </Splitter>
        <WorkPane />
      </Main>
      <StatusBar>
        <StatusItem><Swirl />开始<Caret /></StatusItem>
        <StatusItem><Globe />桌面</StatusItem>
        <StatusItem $on><RedCross />住院护士工作站</StatusItem>
        <StatusRight>
          <button>检码(所有)</button>
          <MenuSep />
          <button>电话</button>
          <button>短信</button>
        </StatusRight>
      </StatusBar>
      <Desktop />
    </Page>
  );
}
